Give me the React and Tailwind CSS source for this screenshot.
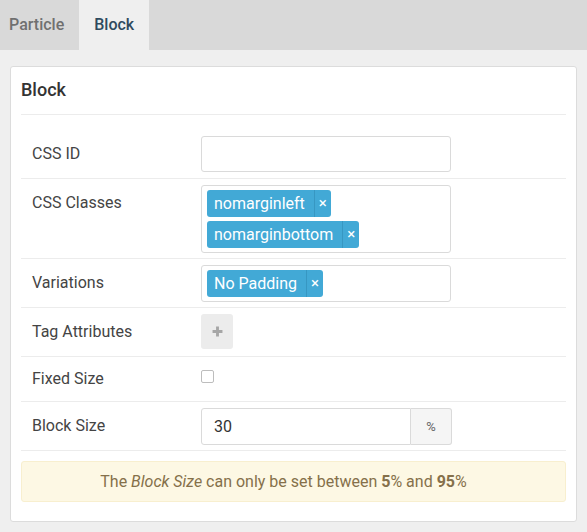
import React from "react"

function Tag({ label }) {
  return (
    <span className="inline-flex h-[27px] items-stretch rounded-[3px] bg-[#42a9d6] text-white text-[16px] leading-[27px]">
      <span className="pl-[7px] pr-[9px]">{label}</span>
      <span className="flex w-[17px] items-center justify-center border-l border-[#3797c2] text-[15px]">×</span>
    </span>
  )
}

function Row({ label, children, className = "" }) {
  return (
    <div className={`flex border-b border-[#ececec] pl-[11px] ${className}`}>
      <div className="w-[169px] shrink-0 leading-[36px] text-[16px] text-[#444]">{label}</div>
      <div className="flex-1">{children}</div>
    </div>
  )
}

export default function App() {
  return (
    <div className="min-h-[532px] w-[587px] bg-[#efefef] font-['Roboto',sans-serif]">
      {/* tabs */}
      <div className="flex h-[50px] bg-[#d9d9d9] text-[16px] font-medium">
        <div className="flex items-center pl-[9px] pr-[15px] text-[#707070]">Particle</div>
        <div className="flex items-center bg-[#efefef] px-[15px] text-[#2e4a5e]">Block</div>
      </div>

      <div className="flex pl-[10px] pr-[10px] pt-[16px] pb-[11px]">
        <div className="w-[567px] rounded-[3px] border border-[#dcdcdc] bg-white px-[10px] pb-[19px]">
          <div className="border-b border-[#ececec] pt-[11px] pb-[12px] text-[18px] font-medium leading-[24px] text-[#333]">
            Block
          </div>

          <div className="mt-[15px]">
            <Row label="CSS ID" className="pt-[6px] pb-[6px]">
              <div className="h-[36px] w-[250px] rounded-[3px] border border-[#dadada]" />
            </Row>

            <Row label="CSS Classes" className="pt-[6px] pb-[5px]">
              <div className="flex w-[250px] flex-col items-start gap-[4px] rounded-[3px] border border-[#dadada] p-[4px] pl-[5px]">
                <Tag label="nomarginleft" />
                <Tag label="nomarginbottom" />
              </div>
            </Row>

            <Row label="Variations" className="pt-[6px] pb-[5px]">
              <div className="flex h-[37px] w-[250px] items-center rounded-[3px] border border-[#dadada] pl-[5px]">
                <Tag label="No Padding" />
              </div>
            </Row>

            <Row label="Tag Attributes" className="pt-[6px] pb-[6px]">
              <div className="flex h-[35px] w-[32px] items-center justify-center rounded-[3px] bg-[#ececec]">
                <svg className="h-[11px] w-[11px]" viewBox="0 0 10 10">
                  <path d="M5 0.5v9M0.5 5h9" stroke="#a6a6a6" strokeWidth="2.6" />
                </svg>
              </div>
            </Row>

            <Row label="Fixed Size" className="pt-[4px] pb-[4px]">
              <div className="h-[36px] pt-[9px]">
                <div className="h-[13px] w-[13px] rounded-[2px] border border-[#bdbdbd] bg-white" />
              </div>
            </Row>

            <Row label="Block Size" className="pt-[6px] pb-[5px]">
              <div className="flex h-[37px] w-[251px]">
                <div className="flex flex-1 items-center rounded-l-[3px] border border-[#dadada] pl-[12px] text-[16px] text-[#333]">
                  30
                </div>
                <div className="flex w-[41px] items-center justify-center rounded-r-[3px] border border-l-0 border-[#dadada] bg-[#f5f5f5] text-[13px] text-[#666]">
                  %
                </div>
              </div>
            </Row>
          </div>

          <div className="mt-[10px] flex h-[41px] items-center justify-center rounded-[3px] border border-[#f8efcf] bg-[#fdf8e4] pr-[20px] text-[16px] text-[#85704a]">
            <span>
              The <em>Block Size</em> can only be set between <b>5</b>% and <b>95</b>%
            </span>
          </div>
        </div>
      </div>
    </div>
  )
}
